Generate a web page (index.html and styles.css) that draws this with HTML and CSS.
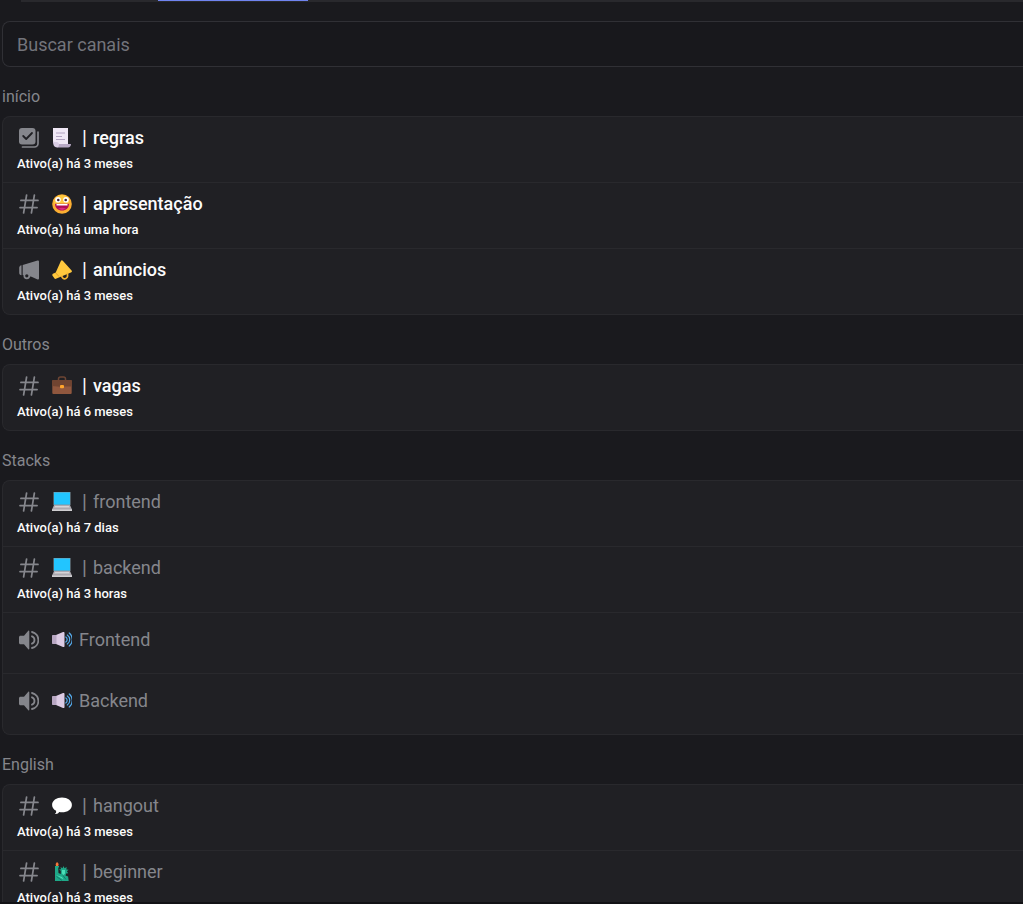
FILE: index.html
```html
<!DOCTYPE html>
<html lang="pt-BR">
<head>
<meta charset="utf-8">
<meta name="viewport" content="width=device-width, initial-scale=1">
<title>Canais</title>
<link rel="stylesheet" href="styles.css">
</head>
<body>
<svg class="sprite" aria-hidden="true">
  <symbol id="hash" viewBox="0 0 20 20"><path d="M7.600 1 4.600 19M15.400 1l-3 18M1.900 6.400H19M1 13.600h17.100" fill="none" stroke="currentColor" stroke-width="1.700" stroke-linecap="round"/></symbol>
  <symbol id="rules" viewBox="0 0 20 20"><path d="M3 0h10.500a3 3 0 0 1 3 3v10.500a3 3 0 0 1-3 3H3a3 3 0 0 1-3-3V3a3 3 0 0 1 3-3Z" fill="currentColor"/><path d="m4.200 8 3 3 5.800-6" fill="none" stroke="#202024" stroke-width="1.800" stroke-linecap="round" stroke-linejoin="round"/><path d="M19 4v11.500a3.500 3.500 0 0 1-3.500 3.500H3.500" fill="none" stroke="currentColor" stroke-width="1.700" stroke-linecap="round"/></symbol>
  <symbol id="horn" viewBox="0 0 20 20"><path d="M18.600.5C19.400.2 20 .6 20 1.400v17.200c0 .8-.6 1.200-1.400.9L12.500 16.700 3.700 15V5L18.600.5Z" fill="currentColor"/><circle cx="7.800" cy="15.800" r="2.500" fill="#202024" stroke="currentColor" stroke-width="1.700"/><path d="M2.500 5.200v10.100C1 15 .2 14 .2 12.700V7.800c0-1.300.8-2.300 2.300-2.600Z" fill="currentColor"/></symbol>
  <symbol id="voice" viewBox="0 0 20 20"><path d="M9.300.8c.4-.5 1-.3 1 .4v17.600c0 .7-.6.900-1 .4L5 14.300H1.500C.6 14.300 0 13.700 0 12.800V7.200c0-.9.6-1.500 1.500-1.500H5Z" fill="currentColor"/><path d="M13 6.300a4 4 0 0 1 0 7.400M13 2a8.200 8.200 0 0 1 0 16" fill="none" stroke="currentColor" stroke-width="1.800" stroke-linecap="round"/></symbol>
  <symbol id="scroll" viewBox="0 0 20 20"><path d="M1 0h15v16H4q-3-.5-3-3Z" fill="#efe7f5"/><path d="M5 16h14q-.2 3.300-3 3.500H5Q7 18 5 16Z" fill="#b8a9c5"/><path d="M1 14h3.500q2.500 0 2.500 2.500T5 19.500Q1 19 1 14Z" fill="#d9cde4"/><path d="M4 5h9M4 8.500h6M4 11.500h9" stroke="#b1a2c0" stroke-width="1"/></symbol>
  <symbol id="smile" viewBox="0 0 20 20"><circle cx="10" cy="10" r="9.800" fill="#fbae32"/><circle cx="9.700" cy="8.500" r="7.500" fill="#ffc83d"/><circle cx="6" cy="5.800" r="2.800" fill="#fff"/><circle cx="14" cy="5.800" r="2.800" fill="#fff"/><circle cx="6.300" cy="6" r="1.300" fill="#43283b"/><circle cx="13.700" cy="6" r="1.300" fill="#43283b"/><path d="M3 9.800h14c0 4.400-3.100 6.800-7 6.800s-7-2.400-7-6.800Z" fill="#b10d55"/><path d="M4.500 10h11v1.500h-11Z" fill="#fff"/><path d="M6 14.800q4-2.300 8 0-3.800 2.300-8 0Z" fill="#d92e7f"/></symbol>
  <symbol id="mega" viewBox="0 0 20 20"><path d="M9 .8c.5-.9 1.300-.9 1.800 0l8.800 9.600c.7.9.3 1.800-.7 2L4.500 18.600c-.8.6-1.500.5-2-.1L.4 15.500c-.3-1 .1-1.600 1-1.900l2.200-.8Z" fill="#ffc83d"/><path d="m9.500 15.500.8 2a2.900 2.900 0 0 0 5.200-2.300v-2.500" fill="none" stroke="#f4b530" stroke-width="1.700"/><path d="m3.600 12.800 3.400 3.700" stroke="#e19d28" stroke-width="1"/></symbol>
  <symbol id="bag" viewBox="0 0 20 20"><path d="M6.500 4.500V3c0-1.200.8-2 2-2h3c1.200 0 2 .8 2 2v1.500" fill="none" stroke="#6d4534" stroke-width="1.500"/><rect x=".3" y="4" width="19.400" height="14" rx="1" fill="#90573e"/><path d="M.3 5c0-.7.4-1 1-1h17.400c.6 0 1 .3 1 1v5.500h-7.200l-5 .2L.3 10Z" fill="#704431"/><rect x="8" y="9" width="4" height="3.200" rx="1" fill="#ffa52d"/></symbol>
  <symbol id="laptop" viewBox="0 0 20 20"><path d="M1.500 0h17v13h-17Z" fill="#7f98a5"/><path d="M2 .5h16v12H2Z" fill="#22c5ff"/><path d="M2 13h16l2 4.500H0Z" fill="#aba8af"/><path d="M3 14h14l.8 1.600H2.200Z" fill="#d5d3d6"/><path d="M0 17.300h20v1.600H0Z" fill="#e4e2e6"/></symbol>
  <symbol id="sound" viewBox="0 0 20 20"><path d="M4 5 11 2c1-.3 1.500.2 1.500 1v13c0 .9-.6 1.300-1.500 1L4 14Z" fill="#dccbe4"/><path d="M1 5h3.500v9H1c-.7 0-1-.3-1-1V6c0-.7.300-1 1-1Z" fill="#b8a7c3"/><path d="M13.800 7a3 3 0 0 1 0 5M15.300 5a5.400 5.400 0 0 1 0 9M17.200 3a8.300 8.300 0 0 1 0 13" fill="none" stroke="#55acee" stroke-width="1.200" stroke-linecap="round"/></symbol>
  <symbol id="bubble" viewBox="0 0 20 20"><path d="M10 1.500c5.500 0 9.900 3.200 9.900 7.400s-4.400 7.400-9.900 7.400q-1.500 0-2.700-.2Q6 18.400 3 18q1.700-1.300 1.100-3.200C1.600 13.400.1 11.300.1 8.900.1 4.700 4.500 1.500 10 1.500Z" fill="#fff"/></symbol>
  <symbol id="liberty" viewBox="0 0 20 20"><path d="M5 0q2.600 2 1 4H4Q2.800 2 5 0Z" fill="#f8763a"/><path d="M3 4h4v1.500H6.200L6.500 11l2.300 1V8.800L6.900 7.500l2.200-.300-.6-2.200 2 1.200 1-2.200 1 2.200 2.200-1.200-.4 2.400 2.300.3-1.700 1.600 1.300 1.900-2 .2-.7 2 2.600 1 .6 4.600H3Z" fill="#1fa888"/><path d="M10 8h3v3.500l-1.500 1.500L10 11.500ZM4 13l6 2 1.500 2.500" fill="#4be0b8"/><path d="M4.500 14.500 10 18.500M11 13.500l3 4" fill="none" stroke="#0b7664" stroke-width=".8"/></symbol>
</svg>

<nav class="tabs" aria-label="Seções"><span class="tab-active"></span></nav>

<main class="browser">
  <input class="search" type="text" placeholder="Buscar canais" aria-label="Buscar canais">

  <section class="group">
    <h2 class="title">início</h2>
    <ul class="card">
      <li><a class="row unread" href="#"><span class="name"><svg class="icon"><use href="#rules"/></svg><svg class="emoji"><use href="#scroll"/></svg><span class="bar">|</span>regras</span><span class="activity">Ativo(a) há 3 meses</span></a></li>
      <li><a class="row unread" href="#"><span class="name"><svg class="icon"><use href="#hash"/></svg><svg class="emoji"><use href="#smile"/></svg><span class="bar">|</span>apresentação</span><span class="activity">Ativo(a) há uma hora</span></a></li>
      <li><a class="row unread" href="#"><span class="name"><svg class="icon"><use href="#horn"/></svg><svg class="emoji"><use href="#mega"/></svg><span class="bar">|</span>anúncios</span><span class="activity">Ativo(a) há 3 meses</span></a></li>
    </ul>
  </section>

  <section class="group">
    <h2 class="title">Outros</h2>
    <ul class="card">
      <li><a class="row unread" href="#"><span class="name"><svg class="icon"><use href="#hash"/></svg><svg class="emoji"><use href="#bag"/></svg><span class="bar">|</span>vagas</span><span class="activity">Ativo(a) há 6 meses</span></a></li>
    </ul>
  </section>

  <section class="group">
    <h2 class="title">Stacks</h2>
    <ul class="card">
      <li><a class="row" href="#"><span class="name"><svg class="icon"><use href="#hash"/></svg><svg class="emoji"><use href="#laptop"/></svg><span class="bar">|</span>frontend</span><span class="activity">Ativo(a) há 7 dias</span></a></li>
      <li><a class="row" href="#"><span class="name"><svg class="icon"><use href="#hash"/></svg><svg class="emoji"><use href="#laptop"/></svg><span class="bar">|</span>backend</span><span class="activity">Ativo(a) há 3 horas</span></a></li>
      <li><a class="row voice" href="#"><span class="name"><svg class="icon"><use href="#voice"/></svg><svg class="emoji"><use href="#sound"/></svg>Frontend</span></a></li>
      <li><a class="row voice" href="#"><span class="name"><svg class="icon"><use href="#voice"/></svg><svg class="emoji"><use href="#sound"/></svg>Backend</span></a></li>
    </ul>
  </section>

  <section class="group">
    <h2 class="title">English</h2>
    <ul class="card">
      <li><a class="row" href="#"><span class="name"><svg class="icon"><use href="#hash"/></svg><svg class="emoji"><use href="#bubble"/></svg><span class="bar">|</span>hangout</span><span class="activity">Ativo(a) há 3 meses</span></a></li>
      <li><a class="row" href="#"><span class="name"><svg class="icon"><use href="#hash"/></svg><svg class="emoji"><use href="#liberty"/></svg><span class="bar">|</span>beginner</span><span class="activity">Ativo(a) há 3 meses</span></a></li>
    </ul>
  </section>
</main>
</body>
</html>
```
FILE: styles.css
```css
* { box-sizing: border-box; }

body {
  margin: 0;
  height: 100vh;
  overflow: hidden;
  display: flex;
  flex-direction: column;
  background: #1a1a1e;
  color: #85868c;
  font-family: Roboto, "Noto Sans", sans-serif;
}

.sprite { display: none; }

.tabs {
  flex: none;
  height: 2px;
  margin-left: 21px;
  padding-left: 137px;
  background: #29292d;
}

.tab-active {
  display: block;
  width: 150px;
  height: 1px;
  background: #7084f0;
}

.browser {
  flex: 1;
  min-height: 0;
  overflow: hidden;
  padding: 19px 0 0 2px;
  border-bottom: 2px solid #121215;
}

.search {
  display: block;
  width: 100%;
  height: 46px;
  padding: 0 14px;
  border: 1px solid #303035;
  border-right: 0;
  border-radius: 8px 0 0 8px;
  background: #18181c;
  color: #fbfbfb;
  font: 400 18px/24px Roboto, "Noto Sans", sans-serif;
  outline: 0;
}

.search::placeholder { color: #73747b; opacity: 1; }

.title {
  margin: 0;
  padding: 20px 0 9px;
  font-size: 16px;
  font-weight: 400;
  line-height: 20px;
}

.card {
  margin: 0;
  padding: 0;
  list-style: none;
  border: 1px solid #29292d;
  border-right: 0;
  border-radius: 8px 0 0 8px;
  background: #202024;
}

.card li + li { border-top: 1px solid #29292d; }

.row {
  display: block;
  padding: 9px 14px 10px;
  color: #85868c;
  text-decoration: none;
}

.voice { padding: 15px 14px 21px; }

.name {
  display: flex;
  align-items: center;
  font-size: 18px;
  font-weight: 400;
  line-height: 24px;
}

.unread .name { color: #fbfbfb; font-weight: 500; }

.icon {
  width: 20px;
  height: 20px;
  margin: 0 13px 0 2px;
  color: #85868c;
}

.emoji {
  width: 20px;
  height: 20px;
  margin-right: 7px;
}

.bar {
  width: 11px;
  margin-right: 3px;
  font-size: 20px;
  font-weight: 400;
  text-align: center;
}

.activity {
  display: block;
  margin-top: 6px;
  color: #fbfbfb;
  font-size: 13px;
  font-weight: 500;
  line-height: 16px;
}
```
